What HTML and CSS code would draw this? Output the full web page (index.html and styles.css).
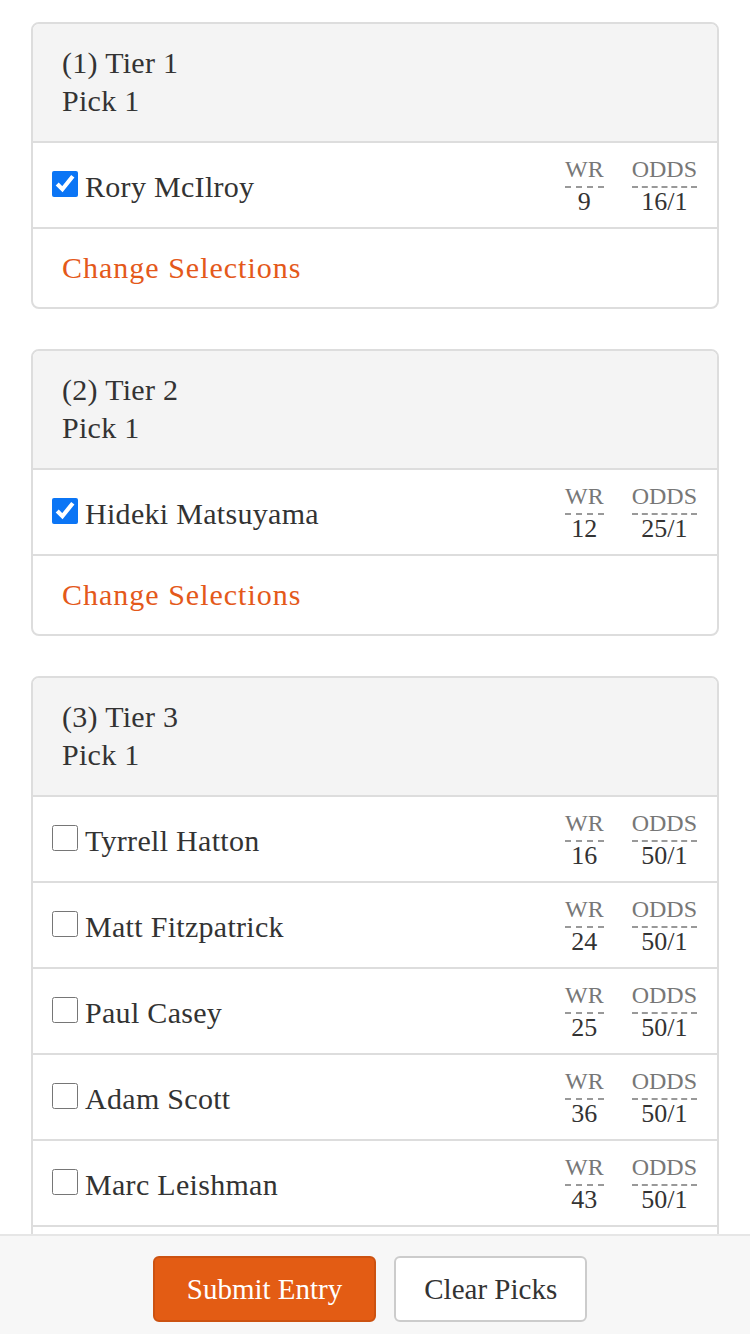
FILE: index.html
```html
<!DOCTYPE html>
<html lang="en">
<head>
    <meta charset="UTF-8">
    <meta name="viewport" content="width=device-width, initial-scale=1.0">
    <title>Make Your Picks</title>
    <link rel="stylesheet" href="styles.css">
</head>
<body>
    <div class="picks">

        <div class="card">
            <div class="card-head">
                <div class="tier-name">(1) Tier 1</div>
                <div class="tier-rule">Pick 1</div>
            </div>
            <label class="pick-row">
                <input type="checkbox" checked>
                <span class="player">Rory McIlroy</span>
                <span class="stats">
                    <span class="stat"><span class="stat-label">WR</span><span class="stat-value">9</span></span>
                    <span class="stat"><span class="stat-label">ODDS</span><span class="stat-value">16/1</span></span>
                </span>
            </label>
            <div class="change-row"><a href="#" class="change-link">Change Selections</a></div>
        </div>

        <div class="card">
            <div class="card-head">
                <div class="tier-name">(2) Tier 2</div>
                <div class="tier-rule">Pick 1</div>
            </div>
            <label class="pick-row">
                <input type="checkbox" checked>
                <span class="player">Hideki Matsuyama</span>
                <span class="stats">
                    <span class="stat"><span class="stat-label">WR</span><span class="stat-value">12</span></span>
                    <span class="stat"><span class="stat-label">ODDS</span><span class="stat-value">25/1</span></span>
                </span>
            </label>
            <div class="change-row"><a href="#" class="change-link">Change Selections</a></div>
        </div>

        <div class="card">
            <div class="card-head">
                <div class="tier-name">(3) Tier 3</div>
                <div class="tier-rule">Pick 1</div>
            </div>
            <label class="pick-row">
                <input type="checkbox">
                <span class="player">Tyrrell Hatton</span>
                <span class="stats">
                    <span class="stat"><span class="stat-label">WR</span><span class="stat-value">16</span></span>
                    <span class="stat"><span class="stat-label">ODDS</span><span class="stat-value">50/1</span></span>
                </span>
            </label>
            <label class="pick-row">
                <input type="checkbox">
                <span class="player">Matt Fitzpatrick</span>
                <span class="stats">
                    <span class="stat"><span class="stat-label">WR</span><span class="stat-value">24</span></span>
                    <span class="stat"><span class="stat-label">ODDS</span><span class="stat-value">50/1</span></span>
                </span>
            </label>
            <label class="pick-row">
                <input type="checkbox">
                <span class="player">Paul Casey</span>
                <span class="stats">
                    <span class="stat"><span class="stat-label">WR</span><span class="stat-value">25</span></span>
                    <span class="stat"><span class="stat-label">ODDS</span><span class="stat-value">50/1</span></span>
                </span>
            </label>
            <label class="pick-row">
                <input type="checkbox">
                <span class="player">Adam Scott</span>
                <span class="stats">
                    <span class="stat"><span class="stat-label">WR</span><span class="stat-value">36</span></span>
                    <span class="stat"><span class="stat-label">ODDS</span><span class="stat-value">50/1</span></span>
                </span>
            </label>
            <label class="pick-row">
                <input type="checkbox">
                <span class="player">Marc Leishman</span>
                <span class="stats">
                    <span class="stat"><span class="stat-label">WR</span><span class="stat-value">43</span></span>
                    <span class="stat"><span class="stat-label">ODDS</span><span class="stat-value">50/1</span></span>
                </span>
            </label>
            <label class="pick-row">
                <input type="checkbox">
                <span class="player">Louis Oosthuizen</span>
                <span class="stats">
                    <span class="stat"><span class="stat-label">WR</span><span class="stat-value">46</span></span>
                    <span class="stat"><span class="stat-label">ODDS</span><span class="stat-value">60/1</span></span>
                </span>
            </label>
        </div>

    </div>

    <div class="footer-bar">
        <button class="btn btn-primary" type="button">Submit Entry</button>
        <button class="btn btn-plain" type="button">Clear Picks</button>
    </div>
</body>
</html>
```

FILE: styles.css
```css
body {
    margin: 0;
    font-family: "Liberation Serif", "Times New Roman", serif;
    font-size: 30px;
    letter-spacing: 0.3px;
    color: #333;
    background: #fff;
}
.picks {
    padding: 22px 31px 140px;
}
.card {
    border: 2px solid #ddd;
    border-radius: 8px;
    margin-bottom: 40px;
    overflow: hidden;
    background: #fff;
}
.card-head {
    background: #f4f4f4;
    padding: 20px 29px 21px;
    line-height: 38px;
}
.pick-row {
    display: flex;
    align-items: center;
    height: 84px;
    padding: 0 20px;
    border-top: 2px solid #ddd;
}
.pick-row input {
    width: 26px;
    height: 26px;
    margin: 0 7px 0 -1px;
    accent-color: #0b75f5;
    position: relative;
    top: -1px;
}
.player {
    flex: 1;
    position: relative;
    top: 2px;
}
.stats {
    display: flex;
    gap: 28px;
    text-align: center;
    letter-spacing: 0;
}
.stat {
    display: flex;
    flex-direction: column;
    align-items: center;
}
.stat-label {
    color: #777;
    font-size: 24px;
    line-height: 26px;
    border-bottom: 2px dashed #999;
    padding-bottom: 4px;
}
.stat-value {
    color: #333;
    font-size: 26px;
    line-height: 27px;
}
.change-row {
    display: flex;
    align-items: center;
    height: 78px;
    padding: 0 29px;
    border-top: 2px solid #ddd;
}
.change-link {
    color: #e4591a;
    text-decoration: none;
    letter-spacing: 1px;
}
.footer-bar {
    position: fixed;
    left: 0;
    right: 0;
    bottom: 0;
    height: 78px;
    padding: 20px 10px 0 0;
    display: flex;
    justify-content: center;
    gap: 18px;
    background: #f7f7f7;
    border-top: 2px solid #e6e6e6;
}
.btn {
    height: 66px;
    padding: 0 28px;
    font-family: inherit;
    font-size: 29px;
    border-radius: 6px;
    cursor: pointer;
}
.btn-primary {
    background: #e35c14;
    border: 2px solid #cc5211;
    color: #fff;
    padding: 0 32px;
}
.btn-plain {
    background: #fff;
    border: 2px solid #ccc;
    color: #333;
}
```
